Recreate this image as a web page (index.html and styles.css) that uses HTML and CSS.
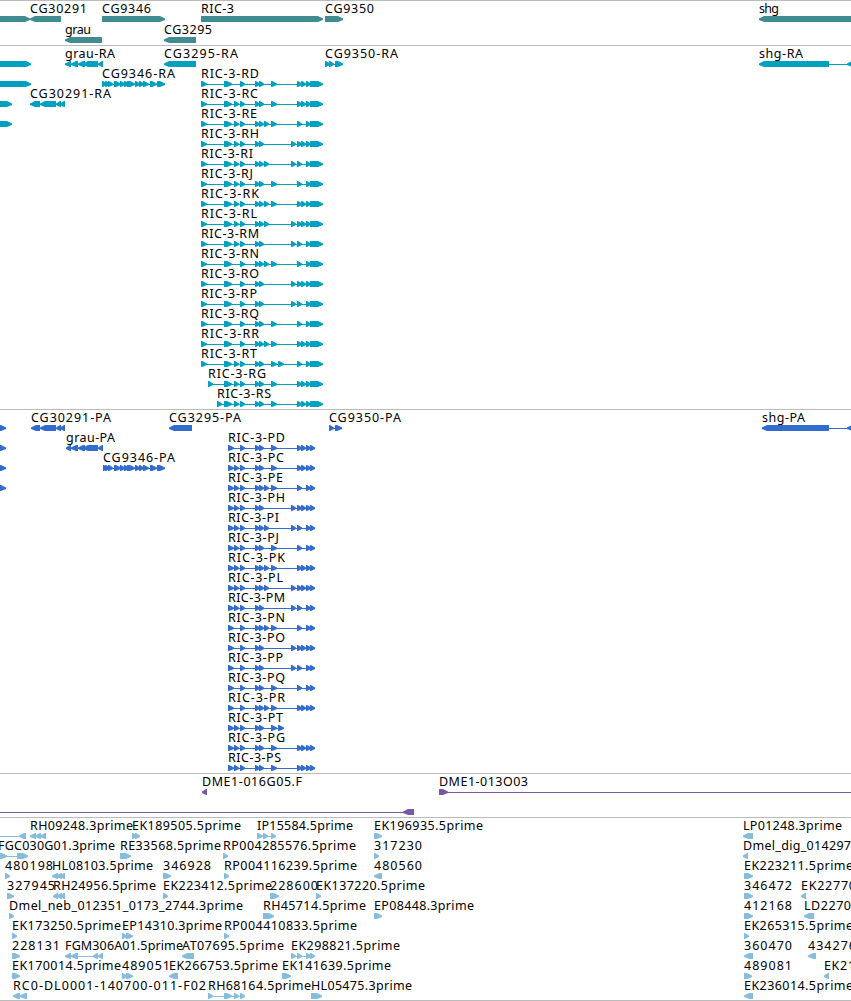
FILE: index.html
```html
<!DOCTYPE html>
<html lang="en">
<head>
  <meta charset="UTF-8">
  <title>Genome tracks</title>
  <link rel="stylesheet" href="styles.css">
</head>
<body>
  <main id="browser"></main>
  <script src="tracks.js"></script>
</body>
</html>
```
FILE: styles.css
```css
html,body{
  margin: 0;
  padding: 0;
}
body{
  background-color: #fff;
  overflow: hidden;
}
#browser{
  display: flex;
  flex-direction: column;
  width: 851px;
  border-bottom: 1px solid #bbb;
}
.track{
  border-top: 1px solid #bbb;
}
.track svg{
  display: block;
  width: 851px;
}
.track text{
  font-family: "Noto Sans", "Liberation Sans", sans-serif;
  font-size: 12.5px;
  fill: #000;
}
.gene{
  fill: #408c90;
}
.mrna{
  fill: #00a0be;
}
.cds{
  fill: #326ccc;
}
.bac{
  fill: #7858a8;
}
.est{
  fill: #87bddc;
}
```
FILE: tracks.js
```js
// exons shared by the RIC-3 transcripts
const exons = {
  a: [201, 207], b: [224, 232], c: [234, 239], d: [240, 245], e: [255, 260],
  f: [259, 264], g: [264, 269], h: [271, 277], i: [278, 284], j: [291, 296],
  k: [297, 302], l: [301, 306], m: [306, 311], n: [310, 323],
  s: [208, 213], t: [217, 222], B: [228, 234], N: [310, 315]
}
const ric = {
  D: 'bdefhklmn', C: 'bcdefhklmn', E: 'bcdefghkmn', H: 'bcdefjklmn',
  I: 'bcdefgjkmn', J: 'bcdefhkmn', K: 'bcdefghklmn', L: 'bcdefgjklmn',
  M: 'bcdefjkmn', N: 'bdefghkmn', O: 'bdefjklmn', P: 'bdefjkmn',
  Q: 'bdefhkmn', R: 'bdefghklmn', T: 'bcdefhikmn', G: 'bcdefhklmn', S: 'bcdefhklmn'
}
const starts = { G: 's', S: 't' }
const widths = { C: 57, E: 56, I: 52, J: 52, L: 56, P: 56, S: 54, T: 56 }

// feature: [label, left, right, strand, exons]
const mrna = [
  [['', 0, 0, 1, [[-9, 31]]], ['grau-RA', 65, 115, -1, [[65, 71], [71, 78], [78, 85], [83, 98], [98, 103]]],
    ['CG3295-RA', 164, 238, -1, [[164, 196]]], ['CG9350-RA', 325, 398, 1, [[325, 330], [329, 334], [335, 343]]],
    ['shg-RA', 759, 803, -1, [[759, 829], [847, 858]]]],
  [['', 0, 0, 1, [[-9, 31]]], ['CG9346-RA', 102, 175, 1, [[102, 107], [105, 110], [108, 113], [114, 121], [120, 125], [124, 129], [127, 135], [135, 140], [139, 144], [143, 149], [150, 157], [157, 165]]]],
  [['', 0, 0, 1, [[-9, 12]]], ['CG30291-RA', 30, 111, -1, [[30, 40], [40, 56], [56, 61], [60, 65]]]],
  [['', 0, 0, 1, [[-9, 12]]]]
]
const cds = [
  [['', 0, 0, 1, [[-9, 6]]], ['CG30291-PA', 31, 111, -1, [[31, 40], [40, 56], [56, 61], [60, 65]]],
    ['CG3295-PA', 169, 241, -1, [[169, 192]]], ['CG9350-PA', 329, 401, 1, [[329, 334], [335, 342]]],
    ['shg-PA', 762, 805, -1, [[762, 829], [847, 858]]]],
  [['', 0, 0, 1, [[-9, 6]]], ['grau-PA', 66, 115, -1, [[66, 71], [71, 78], [78, 85], [83, 98], [98, 103]]]],
  [['', 0, 0, 1, [[-9, 6]]], ['CG9346-PA', 103, 175, 1, [[103, 107], [105, 110], [108, 113], [114, 121], [120, 125], [124, 129], [127, 135], [135, 140], [139, 144], [143, 149], [150, 157], [157, 165]]]],
  [['', 0, 0, 1, [[-9, 6]]]]
]
const order = 'DCEHIJKLMNOPQRTGS'
for(let i = 0; i < order.length; i++){
  const id = order[i]
  const first = starts[id] || 'a'
  const x = exons[first][0]
  const width = widths[id] || 58
  mrna[i + 1] = mrna[i + 1] || []
  mrna[i + 1].push([`RIC-3-R${id}`, x, x + width, 1, [...(first + ric[id])].map(k => exons[k])])
  // the coding part begins inside exon b and ends inside exon n
  const coding = id === 'T' ? 'Bcdefhi' : ric[id].replace('b', 'B').replace('n', 'N')
  cds[i + 1] = cds[i + 1] || []
  cds[i + 1].push([`RIC-3-P${id}`, 228, 227 + width, 1, [...coding].map(k => exons[k])])
}

const tracks = [
  { type: 'gene', height: 44, first: 18, step: 21, rows: [
    [['', 0, 0, 1, [[-9, 30]]], ['CG30291', 30, 87, -1, [[30, 61]]], ['CG9346', 102, 151, 1, [[102, 165]]],
      ['RIC-3', 201, 234, 1, [[201, 323]]], ['CG9350', 325, 374, 1, [[325, 343]]], ['shg', 759, 779, -1, [[759, 870]]]],
    [['grau', 65, 91, -1, [[65, 102]]], ['CG3295', 164, 212, -1, [[164, 196]]]]
  ] },
  { type: 'mrna', height: 363, first: 18, step: 20, rows: mrna },
  { type: 'cds', height: 363, first: 18, step: 20, rows: cds },
  { type: 'bac', height: 43, first: 18, step: 20, rows: [
    [['DME1-016G05.F', 202, 302, -1, [[202, 207]]], ['DME1-013O03', 439, 528, 1, [[439, 448], [870, 880]]]],
    [['', 0, 0, -1, [[-20, -9], [403, 414]]]]
  ] },
  { type: 'est', height: 182, first: 18, step: 20, rows: [
    [['', 0, 0, -1, [[-9, -4], [19, 26]]], ['RH09248.3prime', 30, 133, -1, [[30, 36], [35, 41], [40, 46]]],
      ['EK189505.5prime', 132, 241, 1, [[132, 137], [135, 140]]], ['IP15584.5prime', 257, 353, 1, [[257, 263], [263, 268], [271, 276]]],
      ['EK196935.5prime', 374, 483, 1, [[374, 382]]], ['LP01248.3prime', 743, 842, -1, [[743, 753]]]],
    [['FGC030G01.3prime', -2, 115, 1, [[-3, 7], [17, 28]]], ['RE33568.5prime', 120, 221, 1, [[120, 131]]],
      ['RP004285576.5prime', 223, 356, 1, [[223, 228]]], ['317230', 374, 422, 1, [[374, 379]]], ['Dmel_dig_014297', 743, 851, -1, [[743, 748]]]],
    [['480198', 5, 53, 1, [[5, 10]]], ['HL08103.5prime', 52, 153, -1, [[52, 58], [57, 62], [60, 65]]], ['346928', 163, 211, 1, [[163, 171]]],
      ['RP004116239.5prime', 224, 357, 1, [[224, 229]]], ['480560', 374, 422, -1, [[374, 382]]], ['EK223211.5prime', 744, 853, 1, [[744, 753]]]],
    [['327945', 7, 55, 1, [[7, 14]]], ['RH24956.5prime', 53, 156, -1, [[53, 58], [57, 62], [60, 65]]], ['EK223412.5prime', 163, 272, 1, [[163, 168]]],
      ['228600', 270, 318, 1, [[270, 279]]], ['EK137220.5prime', 316, 425, 1, [[316, 321]]], ['346472', 744, 792, 1, [[744, 753]]],
      ['EK22770', 801, 856, -1, [[801, 806]]]],
    [['Dmel_neb_012351_0173_2744.3prime', 9, 243, 1, [[9, 14]]], ['RH45714.5prime', 263, 366, 1, [[263, 274]]],
      ['EP08448.3prime', 374, 474, 1, [[374, 382]]], ['412168', 744, 792, 1, [[744, 753]]], ['LD2270', 804, 851, -1, [[804, 814]]]],
    [['EK173250.5prime', 12, 121, 1, [[12, 17]]], ['EP14310.3prime', 122, 222, 1, [[122, 127], [126, 133]]],
      ['RP004410833.5prime', 224, 357, 1, [[224, 229]]], ['EK265315.5prime', 744, 853, 1, [[744, 749]]]],
    [['228131', 12, 60, 1, [[12, 20]]], ['FGM306A01.5prime', 65, 183, -1, [[65, 71], [71, 78], [93, 98], [98, 103]]],
      ['AT07695.5prime', 182, 284, -1, [[182, 194]]], ['EK298821.5prime', 291, 400, 1, [[291, 296], [297, 302], [306, 311], [310, 315]]],
      ['360470', 744, 792, -1, [[744, 753]]], ['434276', 808, 856, -1, [[808, 816]]]],
    [['EK170014.5prime', 12, 121, 1, [[12, 20]]], ['489051', 122, 170, 1, [[122, 127], [126, 133]]], ['EK266753.5prime', 169, 278, -1, [[169, 178]]],
      ['EK141639.5prime', 282, 391, 1, [[282, 291]]], ['489081', 744, 792, 1, [[744, 752]]], ['EK21', 824, 855, -1, [[824, 829]]]],
    [['RC0-DL0001-140700-011-F02', 13, 206, -1, [[13, 20], [20, 27]]], ['RH68164.5prime', 208, 311, 1, [[208, 213], [224, 232], [234, 239], [240, 245]]],
      ['HL05475.3prime', 311, 412, 1, [[311, 322]]], ['EK236014.5prime', 744, 853, -1, [[744, 753]]]]
  ] }
]

function drawExon(x0, x1, y, strand){
  const width = x1 - x0
  const head = width > 6 ? 5 : width - 1
  const tail = strand > 0 ? x0 : x1
  const tip = strand > 0 ? x1 : x0
  const neck = tip - strand * head
  return `<polygon points="${tail},${y - 3} ${neck},${y - 3} ${tip},${y - 0.5} ${tip},${y + 1} ${neck},${y + 3} ${tail},${y + 3}"/>`
}

function drawFeature([label, left, right, strand, parts], y){
  const start = parts[0][0]
  const end = parts[parts.length - 1][1]
  let html = ''
  if(parts.length > 1){
    html += `<rect x="${start}" y="${y}" width="${end - start}" height="1"/>`
  }
  for(const [x0, x1] of parts){
    html += drawExon(x0, x1, y, strand)
  }
  if(label){
    html += `<text x="${left}" y="${y - 6}" textLength="${right - left}">${label}</text>`
  }
  return html
}

document.getElementById('browser').innerHTML = tracks.map(track => {
  const marks = track.rows.map((row, i) =>
    row.map(feature => drawFeature(feature, track.first + i * track.step)).join('')
  ).join('')
  return `<section class="track"><svg class="${track.type}" height="${track.height}">${marks}</svg></section>`
}).join('')
```
